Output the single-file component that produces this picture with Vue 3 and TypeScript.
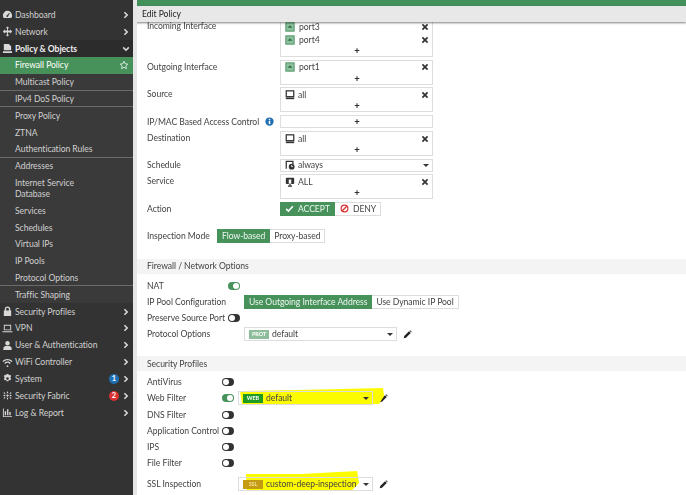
<script setup lang="ts">
interface NavItem { label: string; icon?: string; kind: 'top' | 'sub'; active?: boolean; open?: boolean; divider?: boolean; star?: boolean; badge?: string; badgeColor?: string; tall?: boolean }
const icons: Record<string, string> = {
  dash: 'M12 4a10 10 0 0 0-10 10c0 2 .6 4 1.700 5.500h16.600A10 10 0 0 0 22 14 10 10 0 0 0 12 4zm1.500 11.200a2 2 0 1 1-2.400-1.800L16 8l1 1z',
  net: 'M12 1l4 4h-3v5h5V7l4 5-4 5v-3h-5v5h3l-4 4-4-4h3v-5H6v3l-4-5 4-5v3h5V5H8z',
  policy: 'M4 2h11l5 5v9H4zM2 18h20v4H2z',
  lock: 'M6 10V7a6 6 0 0 1 12 0v3h2v12H4V10zm3 0h6V7a3 3 0 0 0-6 0z',
  vpn: 'M4 4h16v12H4zm2 2v8h12V6zM1 18h22v2H1z',
  user: 'M12 2a5 5 0 1 1 0 10 5 5 0 0 1 0-10zM3 22v-4c0-3 3-5 5-5h8c2 0 5 2 5 5v4z',
  wifi: 'M12 18a2 2 0 1 1 0 4 2 2 0 0 1 0-4zM5 13l2 2c3-3 7-3 10 0l2-2c-4-4-10-4-14 0zM1 9l2 2c5-5 13-5 18 0l2-2C17 3 7 3 1 9z',
  gear: 'M10 2h4l1 3 3-1 2 3-2 3 2 3-2 3-3-1-1 3h-4l-1-3-3 1-2-3 2-3-2-3 2-3 3 1zM12 9a3 3 0 1 0 0 6 3 3 0 0 0 0-6z',
  fabric: 'M4 4l4 4-4 0zM20 4l-4 4h4zM12 2l2 5h-4zM4 20l4-4H4zM20 20l-4-4h4zM12 22l-2-5h4zM2 12l5-2v4zM22 12l-5-2v4zM12 9l3 3-3 3-3-3z',
  log: 'M2 3h2v17h18v2H2zM6 9h3v9H6zM11 5h3v13h-3zM16 11h3v7h-3z',
}
const nav: NavItem[] = [
  { label: 'Dashboard', icon: 'dash', kind: 'top' },
  { label: 'Network', icon: 'net', kind: 'top' },
  { label: 'Policy & Objects', icon: 'policy', kind: 'top', open: true },
  { label: 'Firewall Policy', kind: 'sub', active: true, star: true },
  { label: 'Multicast Policy', kind: 'sub', divider: true },
  { label: 'IPv4 DoS Policy', kind: 'sub', divider: true },
  { label: 'Proxy Policy', kind: 'sub' },
  { label: 'ZTNA', kind: 'sub' },
  { label: 'Authentication Rules', kind: 'sub', divider: true },
  { label: 'Addresses', kind: 'sub' },
  { label: 'Internet Service Database', kind: 'sub', tall: true },
  { label: 'Services', kind: 'sub' },
  { label: 'Schedules', kind: 'sub' },
  { label: 'Virtual IPs', kind: 'sub' },
  { label: 'IP Pools', kind: 'sub' },
  { label: 'Protocol Options', kind: 'sub', divider: true },
  { label: 'Traffic Shaping', kind: 'sub' },
  { label: 'Security Profiles', icon: 'lock', kind: 'top' },
  { label: 'VPN', icon: 'vpn', kind: 'top' },
  { label: 'User & Authentication', icon: 'user', kind: 'top' },
  { label: 'WiFi Controller', icon: 'wifi', kind: 'top' },
  { label: 'System', icon: 'gear', kind: 'top', badge: '1', badgeColor: '#1f6fb5' },
  { label: 'Security Fabric', icon: 'fabric', kind: 'top', badge: '2', badgeColor: '#d9312f' },
  { label: 'Log & Report', icon: 'log', kind: 'top' },
]
const profileRows = [
  { label: 'AntiVirus' },
  { label: 'Web Filter', on: true, sel: 'web' },
  { label: 'DNS Filter' },
  { label: 'Application Control' },
  { label: 'IPS' },
  { label: 'File Filter' },
]
const portDraw = 'M3 7l3-3 3 3z'
const penPath = 'M1 11l.7-3L8 1.700 10.300 4 4 10.300zM8.800 1l.8-.6L11.600 2.400l-.6.800z'
const xPath = 'M1 2.500L2.500 1 5 3.500 7.500 1 9 2.500 6.500 5 9 7.500 7.500 9 5 6.500 2.500 9 1 7.500 3.500 5z'
</script>

<template>
  <div class="page">
    <aside class="side">
      <div v-for="n in nav" :key="n.label" class="nav" :class="[n.kind, { active: n.active, open: n.open, divider: n.divider, tall: n.tall }]">
        <svg v-if="n.icon" class="nicon" viewBox="0 0 24 24"><path :d="icons[n.icon]" fill="#d8d8d8" fill-rule="evenodd" /></svg>
        <span class="nlabel">{{ n.label }}</span>
        <span v-if="n.badge" class="nbadge" :style="{ background: n.badgeColor }">{{ n.badge }}</span>
        <svg v-if="n.kind === 'top'" class="chev" viewBox="0 0 10 10"><path :d="n.open ? 'M1.500 3l3.500 3.500L8.500 3' : 'M3 1.500L6.500 5 3 8.500'" fill="none" stroke="#d8d8d8" stroke-width="2" /></svg>
        <svg v-if="n.star" class="star" viewBox="0 0 24 24"><path d="M12 3l2.800 6 6.400.8-4.700 4.400 1.200 6.500L12 17.500 6.300 20.700l1.200-6.500L2.800 9.800 9.200 9z" fill="none" stroke="#f2f2f2" stroke-width="2" /></svg>
      </div>
    </aside>

    <main class="main">
      <div class="topbar"></div>
      <div class="title">Edit Policy</div>
      <div class="form">
        <div class="row first">
          <label>Incoming Interface</label>
          <div class="box tall2">
            <div class="entry"><svg class="port" viewBox="0 0 12 12"><rect x="1" y="1" width="10" height="10" fill="#8dbf9c" stroke="#3c8a55" /><path :d="portDraw" fill="#2f6f45" /></svg><span>port3</span><svg class="x" viewBox="0 0 10 10"><path :d="xPath" fill="#333" /></svg></div>
            <div class="entry"><svg class="port" viewBox="0 0 12 12"><rect x="1" y="1" width="10" height="10" fill="#8dbf9c" stroke="#3c8a55" /><path :d="portDraw" fill="#2f6f45" /></svg><span>port4</span><svg class="x" viewBox="0 0 10 10"><path :d="xPath" fill="#333" /></svg></div>
            <div class="plus">+</div>
          </div>
        </div>
        <div class="row">
          <label>Outgoing Interface</label>
          <div class="box">
            <div class="entry"><svg class="port" viewBox="0 0 12 12"><rect x="1" y="1" width="10" height="10" fill="#8dbf9c" stroke="#3c8a55" /><path :d="portDraw" fill="#2f6f45" /></svg><span>port1</span><svg class="x" viewBox="0 0 10 10"><path :d="xPath" fill="#333" /></svg></div>
            <div class="plus">+</div>
          </div>
        </div>
        <div class="row">
          <label>Source</label>
          <div class="box">
            <div class="entry"><svg class="port tight" viewBox="0 0 12 12"><rect x="1.500" y="1" width="9" height="7" fill="#fff" stroke="#333" stroke-width="1.500" /><rect x="1" y="9" width="10" height="2" fill="#333" /></svg><span>all</span><svg class="x" viewBox="0 0 10 10"><path :d="xPath" fill="#333" /></svg></div>
            <div class="plus">+</div>
          </div>
        </div>
        <div class="row">
          <label>IP/MAC Based Access Control<svg class="info" viewBox="0 0 12 12"><circle cx="6" cy="6" r="5.500" fill="#1f6fb5" /><rect x="5" y="5" width="2" height="4.500" fill="#fff" /><rect x="5" y="2.500" width="2" height="1.600" fill="#fff" /></svg></label>
          <div class="box"><div class="plus single">+</div></div>
        </div>
        <div class="row">
          <label>Destination</label>
          <div class="box">
            <div class="entry"><svg class="port tight" viewBox="0 0 12 12"><rect x="1.500" y="1" width="9" height="7" fill="#fff" stroke="#333" stroke-width="1.500" /><rect x="1" y="9" width="10" height="2" fill="#333" /></svg><span>all</span><svg class="x" viewBox="0 0 10 10"><path :d="xPath" fill="#333" /></svg></div>
            <div class="plus">+</div>
          </div>
        </div>
        <div class="row">
          <label class="center">Schedule</label>
          <div class="box sched"><svg class="port tight" viewBox="0 0 12 12"><path d="M1.500 10.500V1.500h8V5" fill="none" stroke="#333" stroke-width="1.500" /><circle cx="8" cy="8" r="3.500" fill="#333" /><path d="M8 6v2h1.500" stroke="#fff" fill="none" /></svg><span>always</span><i class="caret"></i></div>
        </div>
        <div class="row">
          <label>Service</label>
          <div class="box">
            <div class="entry"><svg class="port tight" viewBox="0 0 12 12"><rect x="1" y="1" width="10" height="7.500" rx="1" fill="#333" /><path d="M6 4v7M3.500 11h5" stroke="#333" stroke-width="1.500" /><rect x="4.500" y="3" width="3" height="5" fill="#fff" /></svg><span>ALL</span><svg class="x" viewBox="0 0 10 10"><path :d="xPath" fill="#333" /></svg></div>
            <div class="plus">+</div>
          </div>
        </div>
        <div class="row action">
          <label>Action</label>
          <div class="seg">
            <span class="on acc"><svg viewBox="0 0 12 12" class="gi"><path d="M1.500 6.500L4.500 9.500 10.500 3" fill="none" stroke="#fff" stroke-width="2" /></svg>ACCEPT</span>
            <span class="deny"><svg viewBox="0 0 12 12" class="gi"><circle cx="6" cy="6" r="4.500" fill="none" stroke="#d9312f" stroke-width="1.600" /><path d="M3 9l6-6" stroke="#d9312f" stroke-width="1.600" /></svg>DENY</span>
          </div>
        </div>
        <div class="mode">
          <label>Inspection Mode</label>
          <div class="seg"><span class="on">Flow-based</span><span>Proxy-based</span></div>
        </div>
      </div>

      <div class="section s1">Firewall / Network Options</div>
      <div class="form2">
        <div class="line"><label class="short">NAT</label><i class="tog on"></i></div>
        <div class="line"><label>IP Pool Configuration</label><div class="seg"><span class="on">Use Outgoing Interface Address</span><span>Use Dynamic IP Pool</span></div></div>
        <div class="line"><label class="short">Preserve Source Port</label><i class="tog"></i></div>
        <div class="line">
          <label>Protocol Options</label>
          <div class="select wide"><b class="tag prot">PROT</b><span>default</span><i class="caret"></i></div>
          <svg class="pen" viewBox="0 0 12 12"><path :d="penPath" fill="#222" /></svg>
        </div>
      </div>

      <div class="section s2">Security Profiles</div>
      <div class="form3">
        <div v-for="r in profileRows" :key="r.label" class="line p">
          <label>{{ r.label }}</label>
          <i class="tog" :class="{ on: r.on }"></i>
          <div v-if="r.sel" class="hl-wrap">
            <svg class="hl" viewBox="0 0 148 18" preserveAspectRatio="none"><path d="M1 3L60 2 146 0 147 8 142 16 70 17 3 16z" fill="#fdfb00" /></svg>
            <div class="select"><b class="tag web">WEB</b><span>default</span><i class="caret"></i></div>
            <svg class="pen" viewBox="0 0 12 12"><path :d="penPath" fill="#222" /></svg>
          </div>
        </div>
        <div class="line ssl">
          <label>SSL Inspection</label>
          <div class="hl-wrap">
            <svg class="hl h2" viewBox="0 0 120 20" preserveAspectRatio="none"><path d="M3 3L60 3 117 0 119 12 112 19 60 20 4 19z" fill="#fdfb00" /></svg>
            <div class="select"><b class="tag sslt">SSL</b><span>custom-deep-inspection</span><i class="caret"></i></div>
            <svg class="pen" viewBox="0 0 12 12"><path :d="penPath" fill="#222" /></svg>
          </div>
        </div>
      </div>
    </main>
  </div>
</template>

<style>
html, body { margin: 0; background: #fff; overflow: hidden; }
</style>

<style scoped>
.page { display: flex; width: 686px; height: 495px; overflow: hidden; font-family: Lato, "Open Sans", sans-serif; font-size: 8.600px; letter-spacing: -0.05px; color: #444; filter: blur(0.3px); }
.side { width: 133px; height: 495px; flex: none; background: #333; padding-top: 6.500px; box-sizing: border-box; color: #d0d0d0; }
.nav { height: 16.840px; display: flex; align-items: center; box-sizing: border-box; padding-right: 4px; }
.nav.sub { padding-left: 15px; background: #3a3a3a; }
.nav.open { background: #2c2c2c; color: #eee; font-weight: 700; }
.nav.active { background: #47925b; color: #fff; }
.nav.divider { border-bottom: 1px solid #6a6a6a; }
.nav.tall { height: 27.500px; line-height: 11px; padding-right: 50px; }
.nicon { width: 11px; height: 11px; margin: 0 2px 0 2px; flex: none; }
.nlabel { flex: 1; }
.chev { width: 8px; height: 8px; flex: none; margin-right: -1px; }
.star { width: 10px; height: 10px; flex: none; }
.nbadge { width: 10px; height: 10px; border-radius: 50%; color: #fff; font-size: 7.500px; font-weight: 700; display: flex; align-items: center; justify-content: center; margin-right: 3px; }
.main { flex: 1; min-width: 0; height: 495px; border-left: 4px solid #e6e6e6; box-sizing: border-box; position: relative; overflow: hidden; }
.topbar { height: 6px; margin-left: -4px; background: #42905a; }
.title { height: 16px; margin-left: -2px; padding-left: 7px; background: #e8e8e8; display: flex; align-items: center; box-shadow: 0 1px 2px rgba(0,0,0,.5); position: relative; z-index: 2; color: #222; }
.form { padding-left: 10px; }
.row { display: grid; grid-template-columns: 133px 153px; margin-bottom: 2.550px; }
.row.first { margin-top: -3px; }
.row label { line-height: 13px; padding-top: 1px; white-space: nowrap; }
.row label.center { padding-top: 0; }
.info { width: 9px; height: 9px; margin-left: 6px; vertical-align: -1px; }
.box { border: 1px solid #ddd; box-sizing: border-box; padding: 0 3px 0 4px; height: 25px; }
.box.tall2 { height: 38px; }
.box:has(.single) { height: 13px; }
.entry { height: 13px; display: flex; align-items: center; gap: 3px; }
.entry span { flex: 1; }
.port { width: 10px; height: 10px; margin-right: 1px; flex: none; }
.port.tight { margin-right: 0; }
.x { width: 8px; height: 8px; flex: none; }
.plus { height: 10px; line-height: 10px; text-align: center; font-weight: 900; font-size: 9.500px; color: #333; }
.plus.single { height: 11px; line-height: 11px; }
.box.sched { height: 13px; display: flex; align-items: center; gap: 3px; }
.sched span { flex: 1; }
.caret { width: 0; height: 0; border: 3px solid transparent; border-top: 3px solid #333; border-bottom: 0; flex: none; }
.row.action { align-items: center; margin-bottom: 0; }
.seg { display: inline-flex; height: 14px; border: 1px solid #ddd; box-sizing: border-box; align-items: stretch; width: max-content; }
.seg span { display: flex; align-items: center; padding: 0 4px; }
.seg .on { background: #47925b; color: #eef6f0; margin: -1px 0 -1px -1px; padding: 0 5px; }
.seg .acc { padding: 0 5px; }
.seg .deny { padding: 0 4px 0 5px; }
.gi { width: 9px; height: 9px; margin-right: 4px; }
.mode { display: flex; align-items: center; margin-top: 13.500px; height: 14px; }
.mode label { width: 70px; }
.section { height: 15px; background: #f4f4f4; padding-left: 10px; display: flex; align-items: center; color: #444; }
.s1 { margin-top: 15.500px; }
.s2 { margin-top: 13.700px; }
.form2 { padding: 3.800px 0 0 10px; }
.line { display: flex; align-items: center; height: 16.200px; }
.line label { width: 97px; flex: none; white-space: nowrap; }
.line label.short { width: 81px; }
.tog { display: block; width: 12px; height: 8px; border-radius: 4px; background: #333; position: relative; flex: none; }
.tog::after { content: ""; position: absolute; left: 1px; top: 1px; width: 6px; height: 6px; border-radius: 50%; background: #fff; }
.tog.on { background: #47925b; }
.tog.on::after { left: auto; right: 1px; }
.select { display: flex; align-items: center; height: 14px; box-sizing: border-box; border: 1px solid #ddd; width: 135px; padding: 0 3px 0 4px; gap: 3px; position: relative; flex: none; }
.select span { flex: 1; white-space: nowrap; }
.select.wide { width: 153px; }
.tag { font-size: 5.500px; font-weight: 700; color: #fff; padding: 0 3px; height: 9px; line-height: 9px; flex: none; width: 14px; text-align: center; }
.tag.prot { background: #8dbd9a; }
.tag.web { background: #1f9a22; }
.tag.sslt { background: #c59a15; color: #f2e090; }
.pen { width: 9px; height: 9px; margin-left: 6px; flex: none; }
.form3 { padding: 3px 0 0 10px; }
.line.p { height: 16.200px; }
.line.p label { width: 75px; }
.hl-wrap { display: flex; align-items: center; position: relative; margin-left: 4px; }
.hl { position: absolute; left: 1px; top: -3px; width: 146px; height: 18px; }
.hl.h2 { left: 5px; top: -6px; width: 117px; height: 20px; }
.line.ssl { margin-top: 4px; height: 18px; }
.ssl label { width: 91px; }
.ssl .hl-wrap { margin-left: 0; }
</style>
